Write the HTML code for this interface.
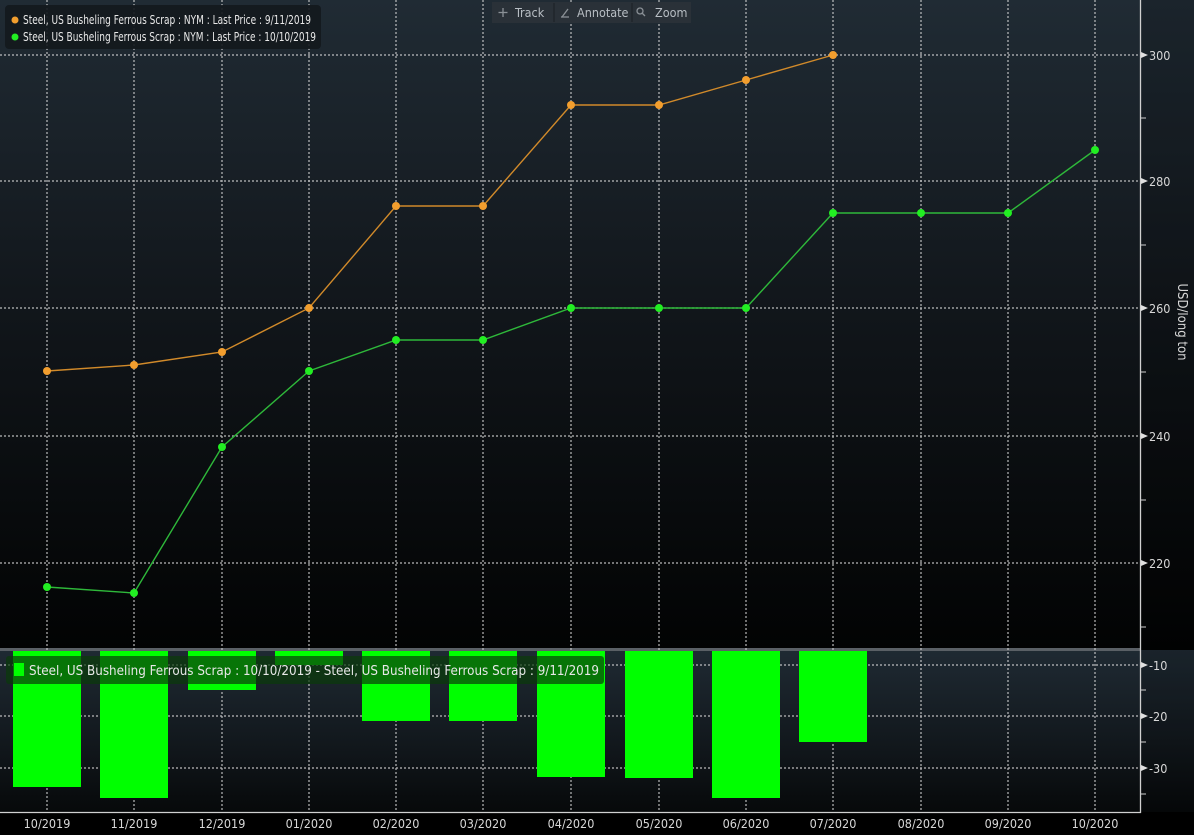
<!DOCTYPE html>
<html><head><meta charset="utf-8"><style>
html,body{margin:0;padding:0;background:#000;}
svg{display:block;}
text{font-family:"DejaVu Sans Condensed","Liberation Sans",sans-serif;}
</style></head><body>
<svg width="1194" height="835" viewBox="0 0 1194 835" xmlns="http://www.w3.org/2000/svg">
<defs>
<linearGradient id="g1" x1="0" y1="0" x2="0" y2="1">
<stop offset="0" stop-color="#202b34"/><stop offset="0.45" stop-color="#12171c"/><stop offset="1" stop-color="#020303"/>
</linearGradient>
<linearGradient id="g2" x1="0" y1="0" x2="0" y2="1">
<stop offset="0" stop-color="#1f2a33"/><stop offset="0.5" stop-color="#12181d"/><stop offset="1" stop-color="#030404"/>
</linearGradient>
</defs>
<rect x="0" y="0" width="1194" height="650" fill="url(#g1)"/>
<rect x="0" y="650" width="1194" height="185" fill="url(#g2)"/>
<rect x="1141" y="0" width="53" height="835" fill="#000" opacity="0.15"/>
<rect x="0" y="812" width="1194" height="23" fill="#000"/>
<rect x="0" y="648" width="1141" height="3" fill="#5a6066"/>
<g stroke="#d8d8d8" stroke-width="1.2" stroke-dasharray="2,2" fill="none" opacity="0.85">
<line x1="0" y1="55" x2="1140" y2="55"/><line x1="0" y1="181" x2="1140" y2="181"/>
<line x1="0" y1="308" x2="1140" y2="308"/><line x1="0" y1="436" x2="1140" y2="436"/>
<line x1="0" y1="563" x2="1140" y2="563"/>
<line x1="0" y1="665" x2="1140" y2="665"/><line x1="0" y1="716" x2="1140" y2="716"/><line x1="0" y1="768" x2="1140" y2="768"/>
<line x1="47" y1="0" x2="47" y2="812"/><line x1="134" y1="0" x2="134" y2="812"/>
<line x1="222" y1="0" x2="222" y2="812"/><line x1="309" y1="0" x2="309" y2="812"/>
<line x1="396" y1="0" x2="396" y2="812"/><line x1="483" y1="0" x2="483" y2="812"/>
<line x1="571" y1="0" x2="571" y2="812"/><line x1="659" y1="0" x2="659" y2="812"/>
<line x1="746" y1="0" x2="746" y2="812"/><line x1="833" y1="0" x2="833" y2="812"/>
<line x1="921" y1="0" x2="921" y2="812"/><line x1="1008" y1="0" x2="1008" y2="812"/>
<line x1="1095" y1="0" x2="1095" y2="812"/>
</g>
<!-- bars -->
<g fill="#00ff00">
<rect x="13" y="651" width="68" height="136"/>
<rect x="100" y="651" width="68" height="147"/>
<rect x="188" y="651" width="68" height="39"/>
<rect x="275" y="651" width="68" height="14"/>
<rect x="362" y="651" width="68" height="70"/>
<rect x="449" y="651" width="68" height="70"/>
<rect x="537" y="651" width="68" height="126"/>
<rect x="625" y="651" width="68" height="127"/>
<rect x="712" y="651" width="68" height="147"/>
<rect x="799" y="651" width="68" height="91"/>
</g>
<!-- lower legend -->
<rect x="6" y="656" width="598" height="28" rx="3" fill="#0a3a0a" opacity="0.7"/>
<rect x="14" y="663" width="10" height="13" fill="#00ff00"/>
<text x="29" y="675" font-size="13" fill="#e8e8e8" textLength="570" lengthAdjust="spacingAndGlyphs">Steel, US Busheling Ferrous Scrap : 10/10/2019 - Steel, US Busheling Ferrous Scrap : 9/11/2019</text>
<!-- lines -->
<polyline fill="none" stroke="#d18a2a" stroke-width="1.4" points="47,371 134,365 222,352 309,308 396,206 483,206 571,105 659,105 746,80 833,55"/>
<polyline fill="none" stroke="#2eb83a" stroke-width="1.4" points="47,587 134,593 222,447 309,371 396,340 483,340 571,308 659,308 746,308 833,213 921,213 1008,213 1095,150"/>
<g fill="#f29e2e">
<circle cx="47" cy="371" r="4"/><circle cx="134" cy="365" r="4"/><circle cx="222" cy="352" r="4"/><circle cx="309" cy="308" r="4"/><circle cx="396" cy="206" r="4"/><circle cx="483" cy="206" r="4"/><circle cx="571" cy="105" r="4"/><circle cx="659" cy="105" r="4"/><circle cx="746" cy="80" r="4"/><circle cx="833" cy="55" r="4"/>
</g>
<g fill="#22ee22">
<circle cx="47" cy="587" r="4"/><circle cx="134" cy="593" r="4"/><circle cx="222" cy="447" r="4"/><circle cx="309" cy="371" r="4"/><circle cx="396" cy="340" r="4"/><circle cx="483" cy="340" r="4"/><circle cx="571" cy="308" r="4"/><circle cx="659" cy="308" r="4"/><circle cx="746" cy="308" r="4"/><circle cx="833" cy="213" r="4"/><circle cx="921" cy="213" r="4"/><circle cx="1008" cy="213" r="4"/><circle cx="1095" cy="150" r="4"/>
</g>
<!-- legend top -->
<rect x="5" y="5" width="316" height="44" rx="4" fill="#14191d" opacity="0.92"/>
<circle cx="15" cy="20" r="3.5" fill="#f29e2e"/>
<circle cx="15" cy="37" r="3.5" fill="#22ee22"/>
<text x="23" y="24" font-size="12.5" fill="#e8e8e8" textLength="288" lengthAdjust="spacingAndGlyphs">Steel, US Busheling Ferrous Scrap : NYM : Last Price : 9/11/2019</text>
<text x="23" y="41" font-size="12.5" fill="#e8e8e8" textLength="293" lengthAdjust="spacingAndGlyphs">Steel, US Busheling Ferrous Scrap : NYM : Last Price : 10/10/2019</text>
<!-- toolbar -->
<rect x="492" y="2" width="199" height="21" fill="#2a3138"/>
<line x1="554" y1="3" x2="554" y2="22" stroke="#1a1f24"/><line x1="632" y1="3" x2="632" y2="22" stroke="#1a1f24"/>
<g stroke="#8a9096" stroke-width="1.3" fill="none">
<line x1="503" y1="8" x2="503" y2="17"/><line x1="498.5" y1="12.5" x2="507.5" y2="12.5"/>
<line x1="562" y1="17" x2="568" y2="9"/><line x1="561" y1="17" x2="569" y2="17"/>
<circle cx="640" cy="11" r="3"/><line x1="642" y1="13" x2="645" y2="16"/>
</g>
<text x="515" y="17" font-size="12.5" fill="#b8bec4">Track</text>
<text x="577" y="17" font-size="12.5" fill="#b8bec4">Annotate</text>
<text x="655" y="17" font-size="12.5" fill="#b8bec4">Zoom</text>
<!-- axes -->
<line x1="1140.5" y1="0" x2="1140.5" y2="813" stroke="#d0d0d0" stroke-width="1.3"/>
<line x1="0" y1="812.5" x2="1141" y2="812.5" stroke="#d0d0d0" stroke-width="1.3"/>
<g fill="#e0e0e0">
<polygon points="1141,52 1148,55 1141,58"/><polygon points="1141,178 1148,181 1141,184"/><polygon points="1141,305 1148,308 1141,311"/><polygon points="1141,433 1148,436 1141,439"/><polygon points="1141,560 1148,563 1141,566"/>
<polygon points="1141,662 1148,665 1141,668"/><polygon points="1141,713 1148,716 1141,719"/><polygon points="1141,765 1148,768 1141,771"/>
</g>
<g stroke="#d0d0d0" stroke-width="1">
<line x1="1141" y1="118" x2="1146" y2="118"/><line x1="1141" y1="245" x2="1146" y2="245"/><line x1="1141" y1="372" x2="1146" y2="372"/><line x1="1141" y1="500" x2="1146" y2="500"/><line x1="1141" y1="627" x2="1146" y2="627"/>
<line x1="1141" y1="690" x2="1146" y2="690"/><line x1="1141" y1="742" x2="1146" y2="742"/><line x1="1141" y1="794" x2="1146" y2="794"/>
</g>
<g font-size="12.5" fill="#d8d8d8">
<text x="1149" y="60">300</text><text x="1149" y="186">280</text><text x="1149" y="313">260</text><text x="1149" y="441">240</text><text x="1149" y="568">220</text>
<text x="1149" y="670">-10</text><text x="1149" y="721">-20</text><text x="1149" y="773">-30</text>
</g>
<text transform="translate(1178,322) rotate(90)" font-size="13" fill="#d8d8d8" text-anchor="middle">USD/long ton</text>
<g font-size="12.5" fill="#d8d8d8" text-anchor="middle">
<text x="47" y="828">10/2019</text><text x="134" y="828">11/2019</text><text x="222" y="828">12/2019</text><text x="309" y="828">01/2020</text><text x="396" y="828">02/2020</text><text x="483" y="828">03/2020</text><text x="571" y="828">04/2020</text><text x="659" y="828">05/2020</text><text x="746" y="828">06/2020</text><text x="833" y="828">07/2020</text><text x="921" y="828">08/2020</text><text x="1008" y="828">09/2020</text><text x="1095" y="828">10/2020</text>
</g>
</svg>
</body></html>
